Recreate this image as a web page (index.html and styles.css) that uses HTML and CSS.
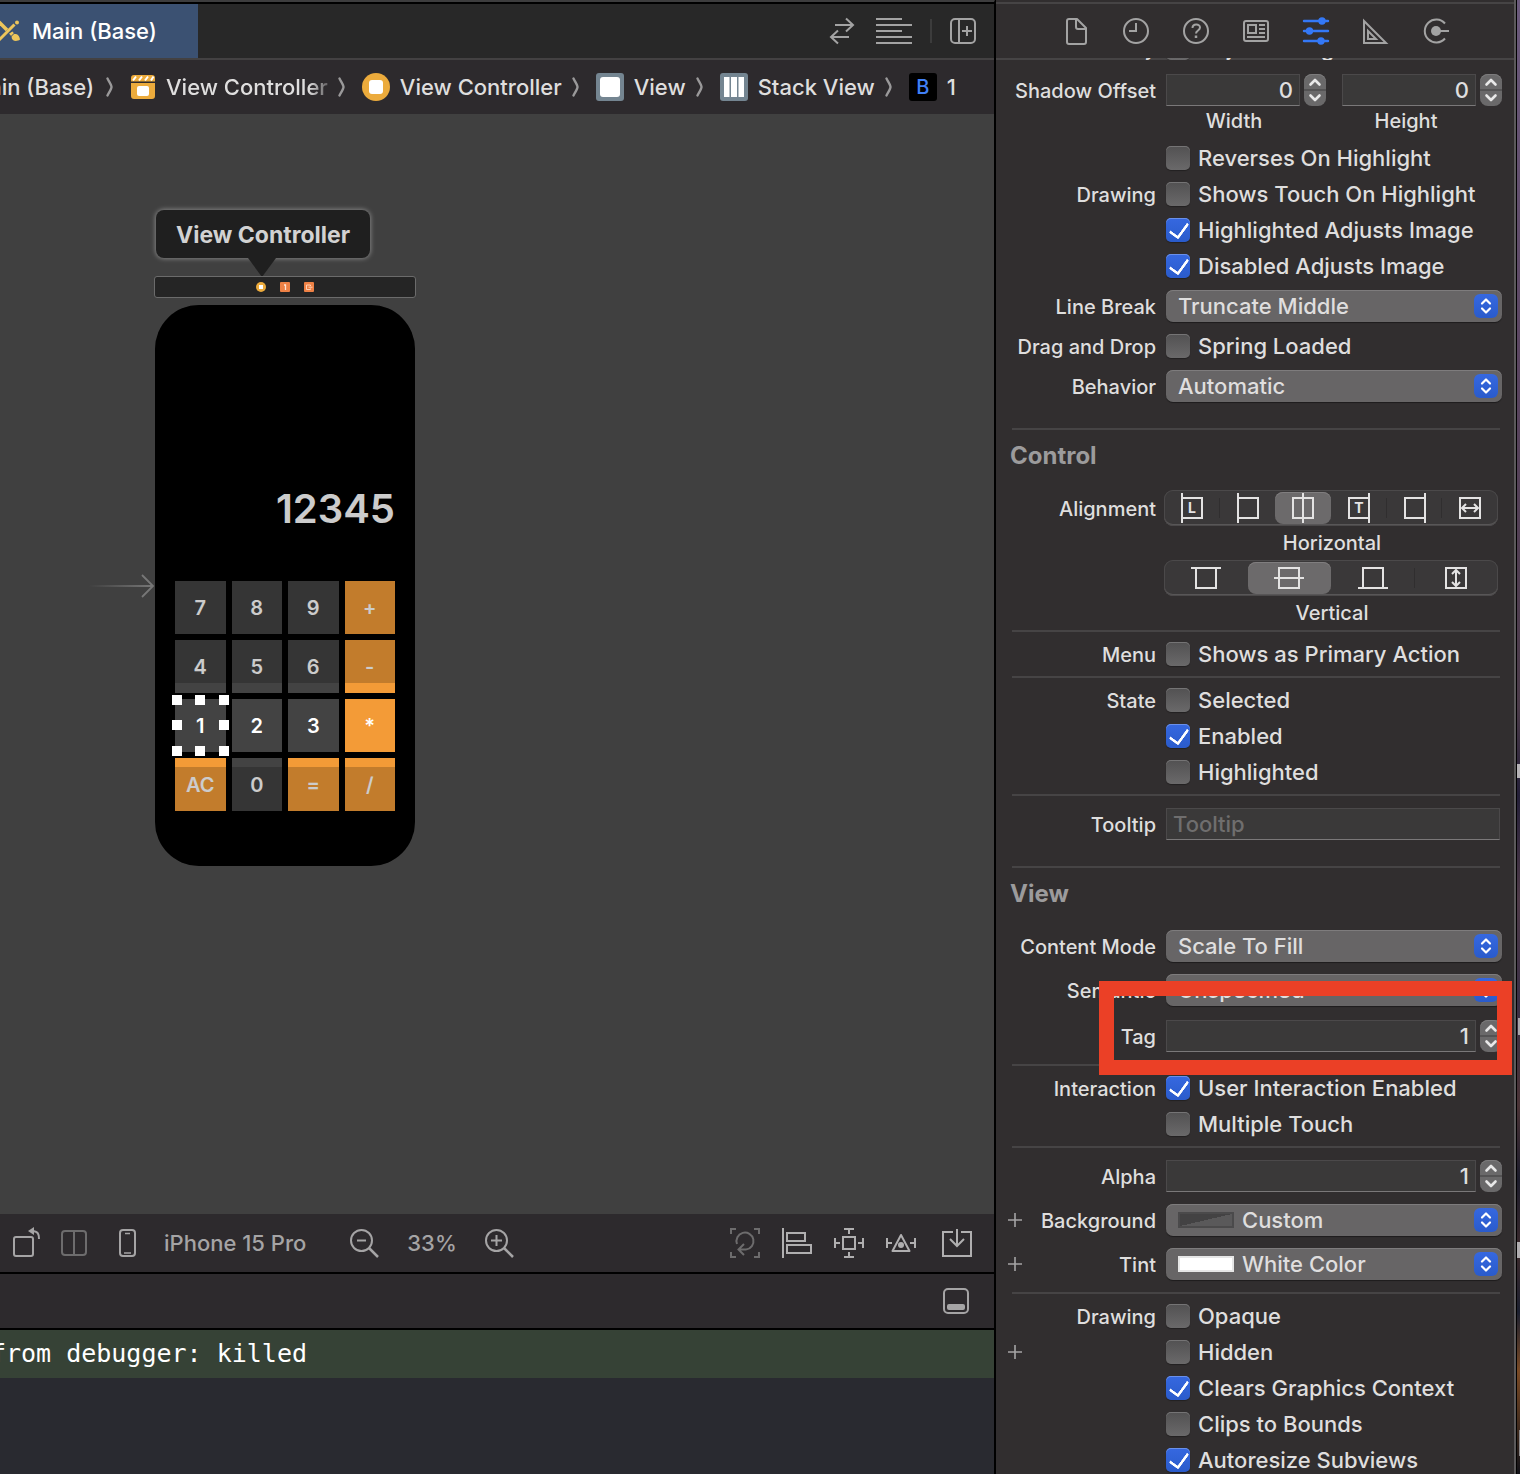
FILE: index.html
```
<!DOCTYPE html>
<html lang="en">
<head>
    <meta charset="UTF-8">
    <title>Main (Base)</title>
    <link rel="stylesheet" href="styles.css">
</head>
<body>
<!-- shared icons -->
<svg class="defs" width="0" height="0">
    <symbol id="updown" viewBox="0 0 24 24">
        <path d="M8 9.500l4-4 4 4M8 14.500l4 4 4-4" fill="none" stroke="#fff" stroke-width="2.200" stroke-linecap="round" stroke-linejoin="round"/>
    </symbol>
    <symbol id="up" viewBox="0 0 22 16">
        <path d="M6.500 10.500L11 6l4.500 4.500" fill="none" stroke="#e8e8e8" stroke-width="2.600" stroke-linecap="round" stroke-linejoin="round"/>
    </symbol>
    <symbol id="down" viewBox="0 0 22 16">
        <path d="M6.500 5.500L11 10l4.500-4.500" fill="none" stroke="#e8e8e8" stroke-width="2.600" stroke-linecap="round" stroke-linejoin="round"/>
    </symbol>
    <symbol id="chevron" viewBox="0 0 8 20">
        <path d="M1.500 1.500C3 4.500 5.500 8 5.500 10S3 15.500 1.500 18.500" fill="none" stroke="#9a999a" stroke-width="2.400" stroke-linecap="round"/>
    </symbol>
    <symbol id="plus" viewBox="0 0 14 14">
        <path d="M7 0v14M0 7h14" stroke="#a5a4a5" stroke-width="1.600"/>
    </symbol>
</svg>

<div class="window">
    <main class="editor">
        <div class="tabs">
            <div class="tab">
                <svg class="tab-icon" width="22" height="22" viewBox="0 0 22 22">
                    <path d="M1 2l8 8" stroke="#edc55b" stroke-width="3.500"/>
                    <path d="M1 20L16.500 4.500" stroke="#edc55b" stroke-width="3"/>
                    <circle cx="19" cy="2.500" r="2" fill="#edc55b"/>
                    <path d="M11 13.500l3.500-2 2 2.500c3.500 0 5 2 5.500 5.500-3 2.500-8.500 2-8.500-3z" fill="#edc55b"/>
                    <path d="M9.500 14.500l4.500-4M12.500 17l4-4" stroke="#3b5172" stroke-width="1"/>
                </svg>
                Main (Base)
            </div>
            <div class="tab-tools">
                <button class="tool tool-swap" aria-label="Swap">
                    <svg width="26" height="28" viewBox="0 0 26 28" fill="none" stroke="#a3a3a3" stroke-width="2"><path d="M6 8h18M17 1.500L24 8l-7 6.500M20 20H2M9 13.500L2 20l7 6.500"/></svg>
                </button>
                <button class="tool" aria-label="Editor options">
                    <svg width="36" height="26" viewBox="0 0 36 26" stroke="#a3a3a3" stroke-width="2"><path d="M0 1h26M0 7h36M0 13h26M0 19h36M0 25h36"/></svg>
                </button>
                <span class="tool-line"></span>
                <button class="tool" aria-label="Add editor">
                    <svg width="26" height="26" viewBox="0 0 26 26" fill="none" stroke="#a3a3a3" stroke-width="2"><rect x="1" y="1" width="24" height="24" rx="4"/><path d="M9 1v24M12 13h10M17 8v10"/></svg>
                </button>
            </div>
        </div>

        <nav class="crumbs">
            <span class="crumb crumb-cut">Main (Base)</span>
            <svg class="chevron"><use href="#chevron"/></svg>
            <svg width="26" height="26" viewBox="0 0 26 26"><path d="M1 9h24v13a3 3 0 0 1-3 3H4a3 3 0 0 1-3-3zM1 7.500V4a3 3 0 0 1 3-3h18a3 3 0 0 1 3 3v3.500z" fill="#ecab3c"/><path d="M3 6.500l3-4M9 6.500l3-4M15 6.500l3-4M21 6.500l2.500-4" stroke="#fff" stroke-width="2"/><rect x="7" y="12" width="12" height="10" rx="2" fill="#fff"/></svg>
            <span class="crumb crumb-fade">View Controller</span>
            <svg class="chevron"><use href="#chevron"/></svg>
            <svg width="28" height="28" viewBox="0 0 28 28"><circle cx="14" cy="14" r="14" fill="#ecab3c"/><rect x="7" y="7" width="14" height="14" rx="3" fill="#fff"/></svg>
            <span class="crumb">View Controller</span>
            <svg class="chevron"><use href="#chevron"/></svg>
            <svg width="28" height="28" viewBox="0 0 28 28"><rect width="28" height="28" rx="3" fill="#748591"/><rect x="4" y="4" width="20" height="20" rx="3" fill="#fff"/></svg>
            <span class="crumb">View</span>
            <svg class="chevron"><use href="#chevron"/></svg>
            <svg width="28" height="28" viewBox="0 0 28 28"><rect width="28" height="28" rx="3" fill="#748591"/><path d="M4 4h5.500v20H4zM11 4h6v20h-6zM18.500 4H24v20h-5.500z" fill="#fff"/></svg>
            <span class="crumb">Stack View</span>
            <svg class="chevron"><use href="#chevron"/></svg>
            <span class="crumb-badge">B</span>
            <span class="crumb">1</span>
        </nav>

        <section class="canvas">
            <div class="scene-tip">View Controller</div>
            <div class="scene-dock">
                <svg width="10" height="10" viewBox="0 0 10 10"><circle cx="5" cy="5" r="5" fill="#ecab3c"/><rect x="3" y="3" width="4" height="4" fill="#fff"/></svg>
                <svg width="10" height="10" viewBox="0 0 10 10"><rect width="10" height="10" rx="1" fill="#ee8145"/><path d="M4 3h1.500v5" stroke="#ffe3d2" fill="none" stroke-width="1.300"/></svg>
                <svg width="10" height="10" viewBox="0 0 10 10"><rect width="10" height="10" rx="1" fill="#ee8145"/><path d="M6.500 4V3h-4v4.500h4v-1M4.500 5.200h4" stroke="#ffd0b5" fill="none"/></svg>
            </div>
            <svg class="entry" width="66" height="24" viewBox="0 0 66 24">
                <defs><linearGradient id="fade"><stop offset="0" stop-color="#777" stop-opacity="0"/><stop offset="1" stop-color="#777"/></linearGradient></defs>
                <rect x="0" y="11" width="64" height="2" fill="url(#fade)"/>
                <path d="M53 1l11 11-11 11" fill="none" stroke="#777" stroke-width="1.800"/>
            </svg>
            <div class="phone">
                <div class="display">12345</div>
                <div class="keys">
                    <button class="key">7</button>
                    <button class="key">8</button>
                    <button class="key">9</button>
                    <button class="key op">+</button>
                    <button class="key">4</button>
                    <button class="key">5</button>
                    <button class="key">6</button>
                    <button class="key op">-</button>
                    <button class="key">1<svg class="handles" width="58" height="62" viewBox="0 0 58 62" fill="#fff"><path d="M0 0h10v10H0zM23 0h10v10H23zM47 0h10v10H47zM0 25h10v10H0zM47 25h10v10H47zM0 51h10v10H0zM23 51h10v10H23zM47 51h10v10H47z"/></svg></button>
                    <button class="key">2</button>
                    <button class="key">3</button>
                    <button class="key op">*</button>
                    <button class="key op">AC</button>
                    <button class="key">0</button>
                    <button class="key op">=</button>
                    <button class="key op">/</button>
                </div>
            </div>
        </section>

        <div class="canvas-bar">
            <div class="bar-left">
                <button class="tool" aria-label="Rotate"><svg width="30" height="30" viewBox="0 0 30 30" fill="none" stroke="#a5a4a5" stroke-width="2"><rect x="2" y="9" width="19" height="19" rx="2"/><path d="M20 3c6 0 7 3 7 8"/><path d="M22-1v8l-6-4z" fill="#a5a4a5" stroke="none"/></svg></button>
                <button class="tool" aria-label="Split"><svg width="26" height="26" viewBox="0 0 26 26" fill="none" stroke="#6d6c6d" stroke-width="2"><rect x="1" y="1" width="24" height="24" rx="3"/><path d="M13 1v24"/></svg></button>
                <button class="tool" aria-label="Device"><svg width="17" height="28" viewBox="0 0 17 28" fill="none" stroke="#a5a4a5" stroke-width="2"><rect x="1" y="1" width="15" height="26" rx="3"/><path d="M6 4.500h5M5 24h7" stroke-width="1.500"/></svg></button>
                <span class="device">iPhone 15 Pro</span>
                <button class="tool" aria-label="Zoom out"><svg width="29" height="29" viewBox="0 0 29 29" fill="none" stroke="#a5a4a5" stroke-width="2"><circle cx="11.500" cy="11.500" r="10.500"/><path d="M19 19l9 9" stroke-width="2.500"/><path d="M7 11.500h9"/></svg></button>
                <span class="zoom">33%</span>
                <button class="tool" aria-label="Zoom in"><svg width="29" height="29" viewBox="0 0 29 29" fill="none" stroke="#a5a4a5" stroke-width="2"><circle cx="11.500" cy="11.500" r="10.500"/><path d="M19 19l9 9" stroke-width="2.500"/><path d="M6 11.500h11M11.500 6v11"/></svg></button>
            </div>
            <div class="bar-right">
                <button class="tool" aria-label="Update frames"><svg width="30" height="30" viewBox="0 0 30 30" fill="none" stroke="#6d6c6d" stroke-width="2"><path d="M1 6V1h5M24 1h5v5M29 24v5h-5M6 29H1v-5M7 16a8.500 8.500 0 1 1 9 5.500M16 21.500H9M14 16l-5.500 5.500L14 27"/></svg></button>
                <button class="tool" aria-label="Align"><svg width="30" height="30" viewBox="0 0 30 30" fill="none" stroke="#b0afb0" stroke-width="2"><path d="M1 0v30"/><rect x="5" y="5" width="18" height="8"/><rect x="5" y="17" width="24" height="8"/></svg></button>
                <button class="tool" aria-label="Add constraints"><svg width="30" height="30" viewBox="0 0 30 30" fill="none" stroke="#b0afb0" stroke-width="2"><rect x="9" y="9" width="12" height="12"/><path d="M10 1h10M15 1v5M10 29h10M15 29v-5M1 10v10M1 15h5M29 10v10M29 15h-5"/></svg></button>
                <button class="tool" aria-label="Resolve issues"><svg width="30" height="30" viewBox="0 0 30 30" fill="none" stroke="#b0afb0" stroke-width="2"><path d="M15 7l8.500 16h-17z" stroke-linejoin="round"/><circle cx="15" cy="17" r="3" fill="#b0afb0" stroke="none"/><path d="M1 10v10M1 15h5M29 10v10M29 15h-5"/></svg></button>
                <button class="tool tool-embed" aria-label="Embed in"><svg width="30" height="28" viewBox="0 0 30 28" fill="none" stroke="#b0afb0" stroke-width="2"><path d="M11 3H1v24h28V3H19M15 0v17M8 10l7 7 7-7"/></svg></button>
            </div>
        </div>
        <div class="debug-bar">
            <button class="tool" aria-label="Toggle debug area"><svg width="26" height="26" viewBox="0 0 26 26"><rect x="1" y="1" width="24" height="24" rx="4" fill="none" stroke="#a5a4a5" stroke-width="2"/><rect x="4" y="16" width="18" height="6" rx="2" fill="#a5a4a5"/></svg></button>
        </div>
        <div class="console">
            <div class="console-line"><span class="console-text">Message from debugger: killed</span></div>
        </div>
    </main>

    <aside class="inspector">
        <div class="inspector-tabs">
            <button class="tool" aria-label="File"><svg width="22" height="27" viewBox="0 0 22 27" fill="none" stroke="#a3a3a3" stroke-width="2" stroke-linejoin="round"><path d="M4 1h8l9 9v14a2 2 0 0 1-2 2H4a2 2 0 0 1-2-2V3a2 2 0 0 1 2-2zM11 1v8a2 2 0 0 0 2 2h8"/></svg></button>
            <button class="tool" aria-label="History"><svg width="26" height="26" viewBox="0 0 26 26" fill="none" stroke="#a3a3a3" stroke-width="2"><circle cx="13" cy="13" r="12"/><path d="M13 5v8H6"/></svg></button>
            <button class="tool" aria-label="Help"><svg width="26" height="26" viewBox="0 0 26 26" fill="none" stroke="#a3a3a3" stroke-width="2"><circle cx="13" cy="13" r="12"/><path d="M9.500 10c0-4.500 7.500-4.500 7.500-.5 0 3-4 3-4 6"/><path d="M13 17.500v2.500" stroke-width="2.500"/></svg></button>
            <button class="tool" aria-label="Identity"><svg width="26" height="22" viewBox="0 0 26 22" fill="none" stroke="#a3a3a3" stroke-width="2"><rect x="1" y="1" width="24" height="20" rx="2"/><rect x="5" y="5" width="8" height="8"/><path d="M16 5h6M16 9h6M16 13h6M4 17h18"/></svg></button>
            <button class="tool" aria-label="Attributes"><svg width="26" height="28" viewBox="0 0 26 28" fill="#3478f6" stroke="#3478f6" stroke-width="2.400" stroke-linecap="round"><path d="M1 4h24M1 14h24M1 24h24"/><circle cx="19" cy="4" r="2.500"/><circle cx="6.500" cy="14" r="2.500"/><circle cx="18" cy="24" r="2.500"/></svg></button>
            <button class="tool" aria-label="Size"><svg width="26" height="26" viewBox="0 0 26 26" fill="none" stroke="#a3a3a3" stroke-width="2"><path d="M1 3v22h22zM5 13v8h8z"/></svg></button>
            <button class="tool" aria-label="Connections"><svg width="26" height="26" viewBox="0 0 26 26" fill="none" stroke="#a3a3a3" stroke-width="2"><path d="M22 5.500a11.500 11.500 0 1 0 0 15M13 13h13"/><circle cx="13" cy="13" r="5" fill="#a3a3a3" stroke="none"/></svg></button>
        </div>

        <form class="attributes">
            <div class="group group-button">
                <div class="row row-scrolled">
                    <span class="name">Accessibility</span>
                    <label class="check"><input type="checkbox">Adjusts Image Size</label>
                </div>
                <div class="row">
                    <span class="name">Shadow Offset</span>
                    <div class="offsets">
                        <div class="offset">
                            <div class="number">
                                <input class="field" id="shadow-width" type="text" value="0">
                                <span class="stepper"><button type="button" aria-label="Increase"><svg><use href="#up"/></svg></button><button type="button" aria-label="Decrease"><svg><use href="#down"/></svg></button></span>
                            </div>
                            <label class="caption" for="shadow-width">Width</label>
                        </div>
                        <div class="offset">
                            <div class="number">
                                <input class="field" id="shadow-height" type="text" value="0">
                                <span class="stepper"><button type="button" aria-label="Increase"><svg><use href="#up"/></svg></button><button type="button" aria-label="Decrease"><svg><use href="#down"/></svg></button></span>
                            </div>
                            <label class="caption" for="shadow-height">Height</label>
                        </div>
                    </div>
                </div>
                <div class="row">
                    <label class="check"><input type="checkbox">Reverses On Highlight</label>
                </div>
                <div class="row">
                    <span class="name">Drawing</span>
                    <label class="check"><input type="checkbox">Shows Touch On Highlight</label>
                </div>
                <div class="row">
                    <label class="check"><input type="checkbox" checked>Highlighted Adjusts Image</label>
                </div>
                <div class="row">
                    <label class="check"><input type="checkbox" checked>Disabled Adjusts Image</label>
                </div>
                <div class="row">
                    <label class="name" for="line-break">Line Break</label>
                    <div class="popup"><select id="line-break"><option>Truncate Middle</option></select><svg><use href="#updown"/></svg></div>
                </div>
                <div class="row">
                    <span class="name">Drag and Drop</span>
                    <label class="check"><input type="checkbox">Spring Loaded</label>
                </div>
                <div class="row">
                    <label class="name" for="behavior">Behavior</label>
                    <div class="popup"><select id="behavior"><option>Automatic</option></select><svg><use href="#updown"/></svg></div>
                </div>
            </div>

            <div class="group group-control">
                <h2>Control</h2>
                <div class="row">
                    <span class="name">Alignment</span>
                    <div class="segments">
                        <button type="button" aria-label="Leading"><svg width="24" height="30" viewBox="0 0 24 30"><path d="M2 0v30M2 5h20v20H2"/><text x="12" y="20">L</text></svg></button>
                        <button type="button" aria-label="Left"><svg width="24" height="30" viewBox="0 0 24 30"><path d="M2 0v30M2 5h20v20H2"/></svg></button>
                        <button type="button" class="on" aria-label="Center"><svg width="24" height="30" viewBox="0 0 24 30"><path d="M12 0v30M2 5h20v20H2z"/></svg></button>
                        <button type="button" aria-label="Trailing"><svg width="24" height="30" viewBox="0 0 24 30"><path d="M22 0v30M22 5H2v20h20"/><text x="12" y="20">T</text></svg></button>
                        <button type="button" aria-label="Right"><svg width="24" height="30" viewBox="0 0 24 30"><path d="M22 0v30M22 5H2v20h20"/></svg></button>
                        <button type="button" aria-label="Fill"><svg width="24" height="30" viewBox="0 0 24 30"><path d="M2 5h20v20H2zM4 15h16M8 11l-4 4 4 4M16 11l4 4-4 4"/></svg></button>
                    </div>
                </div>
                <div class="row"><span class="caption">Horizontal</span></div>
                <div class="row">
                    <div class="segments">
                        <button type="button" aria-label="Top"><svg width="30" height="24" viewBox="0 0 30 24"><path d="M0 2h30M5 2v20h20V2"/></svg></button>
                        <button type="button" class="on" aria-label="Middle"><svg width="30" height="24" viewBox="0 0 30 24"><path d="M0 12h30M5 2h20v20H5z"/></svg></button>
                        <button type="button" aria-label="Bottom"><svg width="30" height="24" viewBox="0 0 30 24"><path d="M0 22h30M5 22V2h20v20"/></svg></button>
                        <button type="button" aria-label="Stretch"><svg width="30" height="24" viewBox="0 0 30 24"><path d="M5 2h20v20H5zM15 4v16M11 8l4-4 4 4M11 16l4 4 4-4"/></svg></button>
                    </div>
                </div>
                <div class="row"><span class="caption">Vertical</span></div>
            </div>

            <div class="group">
                <div class="row">
                    <span class="name">Menu</span>
                    <label class="check"><input type="checkbox">Shows as Primary Action</label>
                </div>
            </div>

            <div class="group">
                <div class="row">
                    <span class="name">State</span>
                    <label class="check"><input type="checkbox">Selected</label>
                </div>
                <div class="row">
                    <label class="check"><input type="checkbox" checked>Enabled</label>
                </div>
                <div class="row">
                    <label class="check"><input type="checkbox">Highlighted</label>
                </div>
            </div>

            <div class="group group-tooltip">
                <div class="row">
                    <label class="name" for="tooltip">Tooltip</label>
                    <input class="field field-text" id="tooltip" type="text" placeholder="Tooltip">
                </div>
            </div>

            <div class="group group-view">
                <h2>View</h2>
                <div class="row">
                    <label class="name" for="content-mode">Content Mode</label>
                    <div class="popup"><select id="content-mode"><option>Scale To Fill</option></select><svg><use href="#updown"/></svg></div>
                </div>
                <div class="row">
                    <label class="name" for="semantic">Semantic</label>
                    <div class="popup"><select id="semantic"><option>Unspecified</option></select><svg><use href="#updown"/></svg></div>
                </div>
                <div class="row row-tag">
                    <label class="name" for="tag">Tag</label>
                    <div class="number">
                        <input class="field" id="tag" type="text" value="1">
                        <span class="stepper"><button type="button" aria-label="Increase"><svg><use href="#up"/></svg></button><button type="button" aria-label="Decrease"><svg><use href="#down"/></svg></button></span>
                    </div>
                    <div class="marker"></div>
                </div>
            </div>

            <div class="group">
                <div class="row">
                    <span class="name">Interaction</span>
                    <label class="check"><input type="checkbox" checked>User Interaction Enabled</label>
                </div>
                <div class="row">
                    <label class="check"><input type="checkbox">Multiple Touch</label>
                </div>
            </div>

            <div class="group group-fields">
                <div class="row">
                    <label class="name" for="alpha">Alpha</label>
                    <div class="number">
                        <input class="field" id="alpha" type="text" value="1">
                        <span class="stepper"><button type="button" aria-label="Increase"><svg><use href="#up"/></svg></button><button type="button" aria-label="Decrease"><svg><use href="#down"/></svg></button></span>
                    </div>
                </div>
                <div class="row">
                    <button class="add" type="button" aria-label="Add background"><svg><use href="#plus"/></svg></button>
                    <label class="name" for="background">Background</label>
                    <div class="popup"><span class="swatch swatch-custom"></span><select id="background"><option>Custom</option></select><svg><use href="#updown"/></svg></div>
                </div>
                <div class="row">
                    <button class="add" type="button" aria-label="Add tint"><svg><use href="#plus"/></svg></button>
                    <label class="name" for="tint">Tint</label>
                    <div class="popup"><span class="swatch"></span><select id="tint"><option>White Color</option></select><svg><use href="#updown"/></svg></div>
                </div>
            </div>

            <div class="group">
                <div class="row">
                    <span class="name">Drawing</span>
                    <label class="check"><input type="checkbox">Opaque</label>
                </div>
                <div class="row">
                    <button class="add" type="button" aria-label="Add hidden"><svg><use href="#plus"/></svg></button>
                    <label class="check"><input type="checkbox">Hidden</label>
                </div>
                <div class="row">
                    <label class="check"><input type="checkbox" checked>Clears Graphics Context</label>
                </div>
                <div class="row">
                    <label class="check"><input type="checkbox">Clips to Bounds</label>
                </div>
                <div class="row">
                    <label class="check"><input type="checkbox" checked>Autoresize Subviews</label>
                </div>
            </div>
        </form>
    </aside>
</div>
</body>
</html>
```

FILE: styles.css
```
* {
    box-sizing: border-box;
}

/* desktop behind the window, with the ends of the icon names */
body {
    margin: 0;
    background:
        linear-gradient(#b5b2b6, #b5b2b6) right 764px / 3px 14px no-repeat,
        linear-gradient(#a8a5aa, #a8a5aa) right 1018px / 2px 17px no-repeat,
        linear-gradient(#b0adb0, #b0adb0) right 1242px / 3px 16px no-repeat,
        linear-gradient(#8a8788, #8a8788) right 1430px / 1px 26px no-repeat,
        linear-gradient(#6b5a7c, #5a4560 25%, #4a3a48 48%, #241f38 54%, #4e3a48 61%, #3a2f45 68%, #4a3336 75%, #1c1c2c 80%, #3c2a2c 85%, #1c2030 89%, #7a4a25 93%, #121218);
    color: #dfdede;
    font: 500 22px/24px Inter, "Liberation Sans", sans-serif;
}

button, input, select {
    font: inherit;
    color: inherit;
    margin: 0;
    padding: 0;
    border: 0;
    background: none;
}

svg {
    display: block;
    flex: none;
}

.defs {
    position: absolute;
}

.window {
    display: grid;
    grid-template-columns: 1fr 522px;
    height: 100vh;
    margin-right: 3px;
    overflow: hidden;
    background: #000;
}

/* editor */
.editor {
    display: flex;
    flex-direction: column;
    min-width: 0;
    height: 100vh;
    border-top: 2px solid #3d3d3e;
    border-right: 1px solid #000;
}

.tabs {
    display: flex;
    justify-content: space-between;
    height: 58px;
    border-top: 2px solid #000;
    border-bottom: 2px solid #434142;
    background: #282828;
}

.tab {
    display: flex;
    align-items: center;
    gap: 12px;
    width: 198px;
    background: #3b5172;
    color: #fff;
}

.tab-icon {
    margin-left: -2px;
}

.tab-tools {
    display: flex;
    align-items: center;
    gap: 18px;
    padding-right: 18px;
}

.tool {
    display: flex;
    align-items: center;
    justify-content: center;
}

.tool svg {
    overflow: visible;
}

.tool-swap {
    margin-right: 3px;
}

.tool-line {
    width: 2px;
    height: 24px;
    background: #3c3c3c;
}

.crumbs {
    display: flex;
    align-items: center;
    height: 54px;
    flex: none;
    background: #2d2a2d;
    white-space: nowrap;
}

.crumb-cut {
    display: flex;
    justify-content: flex-end;
    width: 94px;
    overflow: hidden;
}

.crumb + .chevron {
    width: 8px;
    height: 20px;
    margin: 0 16px 0 10px;
}

.chevron ~ .crumb {
    margin-left: 10px;
}

.crumb-cut + .chevron {
    margin-left: 12px;
}

.crumb-fade {
    -webkit-mask-image: linear-gradient(90deg, #000 88%, rgba(0, 0, 0, .3));
    mask-image: linear-gradient(90deg, #000 88%, rgba(0, 0, 0, .3));
}

.crumb-badge {
    width: 28px;
    border-radius: 3px;
    background: #000;
    color: #4080f7;
    font-size: 20px;
    line-height: 28px;
    text-align: center;
}

.canvas {
    position: relative;
    flex: 1;
    background: #404040;
}

.scene-tip {
    position: absolute;
    left: 156px;
    top: 96px;
    padding: 13px 20px 11px;
    border-radius: 8px;
    background: #1f1f1f;
    box-shadow: 0 0 4px 1px #808080;
    color: #d2d2d2;
    font-size: 23px;
    font-weight: 700;
}

.scene-tip::after {
    content: "";
    position: absolute;
    left: 92px;
    top: 100%;
    border: solid transparent;
    border-width: 19px 14px 0;
    border-top-color: #1f1f1f;
}

.scene-dock {
    position: absolute;
    left: 154px;
    top: 162px;
    display: flex;
    align-items: center;
    justify-content: center;
    gap: 14px;
    width: 262px;
    height: 22px;
    border: 1px solid #6b6b6b;
    border-radius: 3px;
    background: #252525;
}

.entry {
    position: absolute;
    left: 89px;
    top: 460px;
}

.phone {
    position: absolute;
    left: 155px;
    top: 191px;
    width: 260px;
    padding: 180px 20px 55px;
    border-radius: 44px;
    background: #000;
    overflow: hidden;
}

/* dimmed areas around the selected stack */
.phone::before, .phone::after {
    content: "";
    position: absolute;
    left: 0;
    right: 0;
    z-index: 1;
    background: rgba(0, 0, 0, .2);
}

.phone::before {
    top: 0;
    height: 378px;
}

.phone::after {
    bottom: 0;
    height: 99px;
}

.display {
    height: 96px;
    color: #fff;
    font-size: 40px;
    font-weight: 600;
    line-height: 48px;
    text-align: right;
}

.keys {
    display: grid;
    grid-template-columns: repeat(4, 1fr);
    grid-auto-rows: 53px;
    gap: 6px;
}

.key {
    position: relative;
    background: #434343;
    color: #fff;
    font-size: 20px;
    font-weight: 600;
}

.op {
    background: #f39b37;
}

.handles {
    position: absolute;
    left: -3px;
    top: -4px;
}

.canvas-bar {
    display: flex;
    align-items: center;
    justify-content: space-between;
    height: 60px;
    flex: none;
    padding: 0 22px 0 12px;
    border-bottom: 2px solid #000;
    background: #2d2a2d;
    color: #a5a4a5;
}

.bar-left, .bar-right {
    display: flex;
    align-items: center;
}

.bar-left {
    gap: 28px;
}

.bar-left .tool:first-child {
    margin-right: -9px;
}

.bar-left .tool:nth-child(3) {
    margin-left: 4px;
}

.device, .zoom {
    white-space: nowrap;
}

.device {
    margin-right: 16px;
}

.bar-right {
    gap: 22px;
}

.tool-embed {
    margin-left: 4px;
}

.debug-bar {
    display: flex;
    align-items: center;
    justify-content: flex-end;
    height: 56px;
    flex: none;
    padding-right: 25px;
    border-bottom: 2px solid #000;
    background: #2d2a2d;
}

.console {
    height: 144px;
    flex: none;
    background: #292a30;
}

.console-line {
    background: #364236;
}

.console-text {
    display: flex;
    justify-content: flex-end;
    width: 307px;
    overflow: hidden;
    color: #fff;
    font: 25px/48px "DejaVu Sans Mono", monospace;
    white-space: nowrap;
}

/* inspector */
.inspector {
    height: 100vh;
    margin: 0 1px;
    overflow: hidden;
    border-right: 2px solid #5b595a;
    background: #312e2f;
}

.inspector-tabs {
    display: grid;
    grid-template-columns: repeat(7, 60px);
    justify-content: center;
    height: 58px;
    margin-top: 2px;
    padding-left: 2px;
    border: solid #464445;
    border-width: 2px 0;
}

.attributes {
    margin-top: -2px;
    padding: 0 12px;
}

.group {
    position: relative;
    display: flex;
    flex-direction: column;
    gap: 12px;
    padding: 12px 0 10px;
}

.group::before {
    content: "";
    position: absolute;
    left: 4px;
    right: 2px;
    top: 0;
    height: 2px;
    background: #464445;
}

.group-button {
    padding: 0 0 26px;
}

.group-button::before {
    display: none;
}

.group-control {
    gap: 0;
    padding: 2px 0 0;
}

.group-tooltip {
    padding: 14px 0 26px;
}

.group-view {
    padding: 2px 0 12px;
}

.group-fields {
    padding: 14px 0 12px;
}

h2 {
    margin: 0 0 8px 2px;
    color: #9c9b9c;
    font-size: 24px;
    font-weight: 700;
    line-height: 52px;
}

.group-view h2 {
    margin-bottom: -2px;
}

.row {
    position: relative;
    display: grid;
    grid-template-columns: 148px 1fr;
    column-gap: 10px;
    align-items: start;
}

.row > * {
    grid-row: 1;
    grid-column: 2;
}

.row > .name {
    grid-column: 1;
    align-self: center;
    padding-top: 1px;
    margin-bottom: -1px;
    font-size: 20px;
    text-align: right;
    white-space: nowrap;
}

.row > .add {
    grid-column: 1;
    align-self: center;
    width: 14px;
    height: 14px;
}

.add svg {
    width: 14px;
    height: 14px;
}

.row-scrolled {
    grid-template-rows: 2px;
    height: 2px;
    margin-bottom: 2px;
    align-items: end;
    overflow: hidden;
}

.row-scrolled > .name {
    align-self: end;
}

.row-tag {
    margin-top: 2px;
}

.offsets {
    display: grid;
    grid-template-columns: 1fr 1fr;
    gap: 16px;
}

.row:has(.offsets) > .name {
    align-self: start;
    padding: 0;
    line-height: 34px;
}

.offset .caption {
    display: block;
    margin: 2px 24px 0 0;
    line-height: 26px;
}

.offset:last-child .caption {
    margin-right: 32px;
}

.caption {
    margin-right: 4px;
    font-size: 20px;
    line-height: 34px;
    text-align: center;
}

.check {
    display: flex;
    align-items: center;
    gap: 8px;
    height: 24px;
    white-space: nowrap;
}

.check input {
    appearance: none;
    width: 24px;
    height: 24px;
    border-radius: 5px;
    background: linear-gradient(#525152, #6a696a);
    box-shadow: inset 0 1px #757475, 0 1px 1px rgba(0, 0, 0, .3);
}

.check input:checked {
    background: linear-gradient(#3668e0, #2a5bcb);
    box-shadow: inset 0 1px #6a90ea, 0 1px 1px rgba(0, 0, 0, .3);
}

.check input:checked::before {
    content: "";
    display: block;
    width: 9px;
    height: 16px;
    margin: 1px 0 0 7px;
    border: solid #fff;
    border-width: 0 3px 3px 0;
    border-radius: 2px;
    transform: rotate(36deg);
}

.number {
    display: flex;
    gap: 4px;
}

.field {
    flex: 1;
    min-width: 0;
    width: 100%;
    height: 32px;
    padding: 0 6px;
    border: 1px solid #4b494a;
    border-bottom-color: #7a7879;
    background: #3a3939;
    text-align: right;
}

.field-text {
    width: calc(100% - 2px);
    text-align: left;
}

.field::placeholder {
    color: #6f6e6e;
    opacity: 1;
}

.stepper {
    display: flex;
    flex-direction: column;
    width: 22px;
    height: 32px;
    border-radius: 8px;
    background: linear-gradient(#6a696a 15px, #545354 15px, #545354 17px, #6a696a 17px);
    box-shadow: inset 0 1px #7d7c7d;
}

.stepper svg {
    width: 22px;
    height: 16px;
}

.popup {
    position: relative;
    display: flex;
    align-items: center;
    height: 32px;
    padding: 0 4px 0 12px;
    border-radius: 7px;
    background: #676566;
    box-shadow: inset 0 1px #7e7c7d, 0 1px 1px rgba(0, 0, 0, .4);
}

.popup select {
    appearance: none;
    flex: 1;
    height: 32px;
}

.popup svg {
    width: 24px;
    height: 24px;
    border-radius: 6px;
    background: linear-gradient(#3668e0, #2a5bcb);
}

.swatch {
    width: 56px;
    height: 16px;
    margin-right: 8px;
    border: 2px solid #e6e6e6;
    background: #fff;
}

.swatch-custom {
    border-color: #4b4a4b;
    background: linear-gradient(to bottom right, #434243 50%, #5a595a 50%);
}

.segments {
    display: flex;
    height: 36px;
    margin: 0 4px 0 -2px;
    border-radius: 9px;
    background: #3a3839;
    box-shadow: inset 0 0 0 1px #4b494a, inset 0 -2px #585657;
}

.segments button {
    display: flex;
    align-items: center;
    justify-content: center;
    flex: 1;
    margin: 2px 0;
    background: linear-gradient(#302e2f, #302e2f) right center / 1px 20px no-repeat;
}

.segments button:last-child, .segments button:has(+ .on) {
    background: none;
}

.segments .on {
    border-radius: 8px;
    background: #6c6a6b;
    box-shadow: inset 0 1px #807e7f;
}

.segments svg {
    fill: none;
    stroke: #e4e3e3;
    stroke-width: 2;
}

.segments text {
    fill: #e4e3e3;
    stroke: none;
    font-size: 14px;
    font-weight: 700;
    text-anchor: middle;
}

/* outline round the tag field */
.row > .marker {
    position: absolute;
    left: 91px;
    right: -10px;
    top: -39px;
    bottom: -23px;
    z-index: 1;
    grid-area: auto;
    border: 15px solid #eb4026;
}
```
